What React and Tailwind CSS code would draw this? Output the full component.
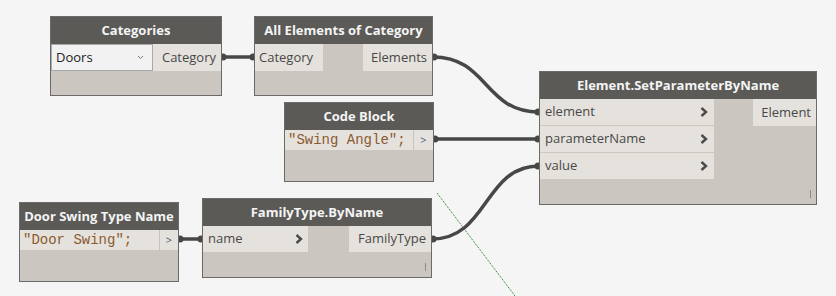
import React from 'react';

// Dynamo-style node graph

const font = { fontFamily: '"Open Sans", "Noto Sans", sans-serif' };

function Chevron() {
  return (
    <svg width="8" height="10" viewBox="0 0 8 10" className="shrink-0">
      <path d="M1.5 1 L6 5 L1.5 9" fill="none" stroke="#4a4a4a" strokeWidth="2.4" />
    </svg>
  );
}

function Header({ title }) {
  return (
    <div className="h-[27px] bg-[#5b5a57] text-[#f4f4f4] text-[13px] font-bold flex items-center justify-center whitespace-nowrap">
      {title}
    </div>
  );
}

function Tick() {
  return <div className="absolute right-[5px] bottom-[6px] w-px h-[8px] bg-[#8a8a8a]" />;
}

function CodeRow({ code, width }) {
  return (
    <div className="flex h-[20px]">
      <div
        className={`${width} bg-[#e5e2dd] text-[14px] text-[#8a5a30] pl-[3px] leading-[20px] whitespace-nowrap`}
        style={{ fontFamily: '"Liberation Mono", "DejaVu Sans Mono", monospace' }}
      >
        {code}
      </div>
      <div className="flex-1 bg-[#e5e2dd] border-l border-[#c8c4bd] flex items-center justify-center text-[11px] text-[#4f5b7a]">
        &gt;
      </div>
    </div>
  );
}

export default function App() {
  return (
    <div className="relative w-[836px] h-[296px] bg-[#f5f5f5] overflow-hidden text-[#484848]" style={font}>
      {/* wires */}
      <svg className="absolute inset-0" width="836" height="296">
        <line x1="437" y1="193" x2="515" y2="296" stroke="#0c7a0c" strokeWidth="1" strokeDasharray="1 1" />
        <g fill="none" stroke="#474747" strokeWidth="3.5">
          <path d="M222 57 L254 57" />
          <path d="M433 57 C488 57 484 112 539 112" />
          <path d="M434 139 L539 139" />
          <path d="M432 239 C488 239 484 166 539 166" />
          <path d="M179 239 L202 239" />
        </g>
        <g fill="#474747">
          <circle cx="223" cy="57" r="3.5" />
          <circle cx="253" cy="57" r="3.5" />
          <circle cx="434" cy="57" r="3.5" />
          <circle cx="538" cy="112" r="3.5" />
          <circle cx="435" cy="139" r="3.5" />
          <circle cx="538" cy="139" r="3.5" />
          <circle cx="433" cy="239" r="3.5" />
          <circle cx="538" cy="166" r="3.5" />
          <circle cx="180" cy="239" r="3.5" />
          <circle cx="201" cy="239" r="3.5" />
        </g>
      </svg>

      {/* Categories */}
      <div className="absolute left-[50px] top-[16px] w-[172px] h-[80px] bg-[#cbc7c0] border border-[#6a6a6a]">
        <Header title="Categories" />
        <div className="flex h-[27px]">
          <div className="w-[102px] bg-[#f2f2f2] border border-[#a9a9a9] flex items-center justify-between pl-[4px] pr-[8px] text-[13px] text-[#222]">
            <span>Doors</span>
            <svg width="7" height="5" viewBox="0 0 7 5">
              <path d="M1 1 L3.5 3.5 L6 1" fill="none" stroke="#777" strokeWidth="1" />
            </svg>
          </div>
          <div className="flex-1 bg-[#e5e2dd] flex items-center justify-end pr-[5px] text-[13px]">Category</div>
        </div>
      </div>

      {/* All Elements of Category */}
      <div className="absolute left-[254px] top-[16px] w-[179px] h-[80px] bg-[#cbc7c0] border border-[#6a6a6a]">
        <Header title="All Elements of Category" />
        <div className="flex justify-between h-[27px] text-[13px]">
          <div className="w-[68px] bg-[#e5e2dd] flex items-center pl-[4px]">Category</div>
          <div className="w-[69px] bg-[#e5e2dd] flex items-center justify-end pr-[5px]">Elements</div>
        </div>
      </div>

      {/* Element.SetParameterByName */}
      <div className="absolute left-[539px] top-[71px] w-[278px] h-[134px] bg-[#cbc7c0] border border-[#6a6a6a]">
        <Header title="Element.SetParameterByName" />
        <div className="flex justify-between text-[13px]">
          <div className="w-[174px] flex flex-col">
            <div className="h-[27px] bg-[#e5e2dd] border-b border-[#cdc9c2] flex items-center justify-between pl-[5px] pr-[6px]">
              <span>element</span>
              <Chevron />
            </div>
            <div className="h-[27px] bg-[#e5e2dd] border-b border-[#cdc9c2] flex items-center justify-between pl-[5px] pr-[6px]">
              <span>parameterName</span>
              <Chevron />
            </div>
            <div className="h-[26px] bg-[#e5e2dd] flex items-center justify-between pl-[5px] pr-[6px]">
              <span>value</span>
              <Chevron />
            </div>
          </div>
          <div className="w-[63px] h-[27px] bg-[#e5e2dd] flex items-center justify-end pr-[5px]">Element</div>
        </div>
        <Tick />
      </div>

      {/* Code Block */}
      <div className="absolute left-[284px] top-[102px] w-[150px] h-[80px] bg-[#cbc7c0] border border-[#6a6a6a]">
        <Header title="Code Block" />
        <CodeRow code={'"Swing Angle";'} width="w-[128px]" />
      </div>

      {/* Door Swing Type Name */}
      <div className="absolute left-[19px] top-[202px] w-[160px] h-[80px] bg-[#cbc7c0] border border-[#6a6a6a]">
        <Header title="Door Swing Type Name" />
        <CodeRow code={'"Door Swing";'} width="w-[139px]" />
      </div>

      {/* FamilyType.ByName */}
      <div className="absolute left-[202px] top-[198px] w-[230px] h-[80px] bg-[#cbc7c0] border border-[#6a6a6a]">
        <Header title="FamilyType.ByName" />
        <div className="flex justify-between h-[26px] text-[13px]">
          <div className="w-[105px] bg-[#e5e2dd] flex items-center justify-between pl-[5px] pr-[5px]">
            <span>name</span>
            <Chevron />
          </div>
          <div className="w-[82px] bg-[#e5e2dd] flex items-center justify-end pr-[5px]">FamilyType</div>
        </div>
        <Tick />
      </div>
    </div>
  );
}
